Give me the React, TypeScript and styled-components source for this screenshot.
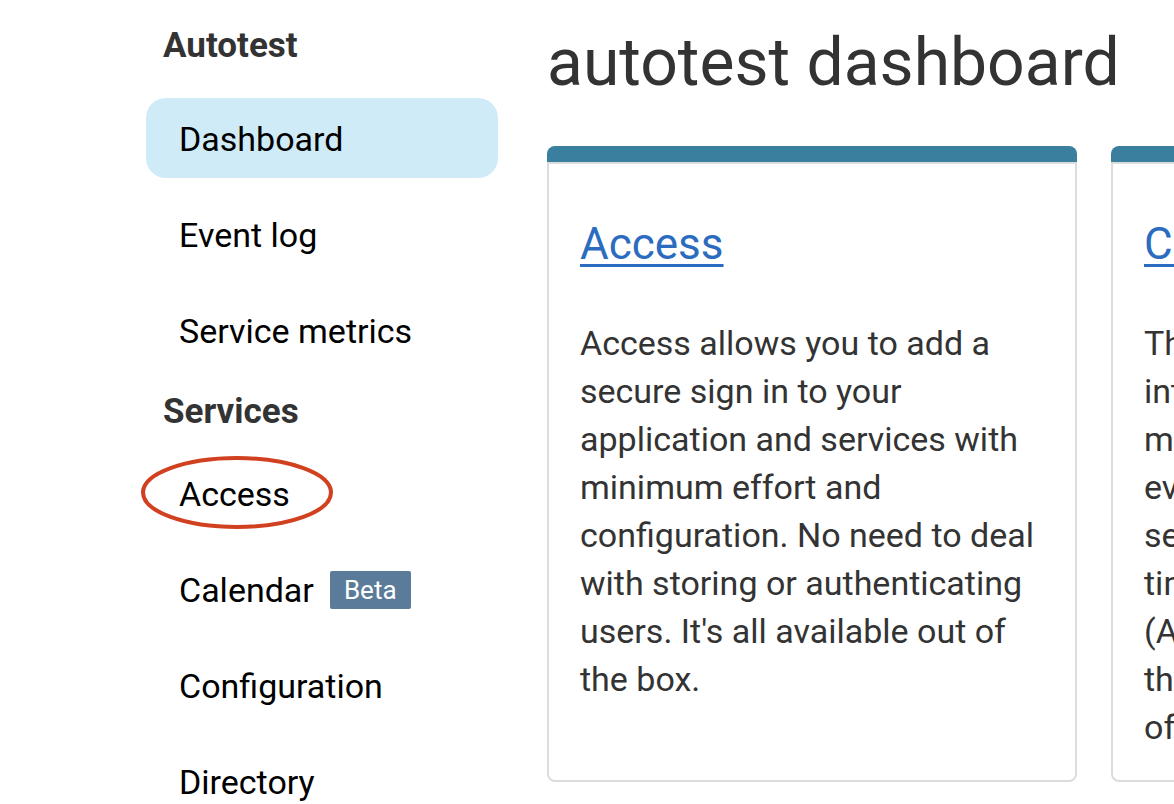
import React from "react";
import styled, { createGlobalStyle } from "styled-components";

const Global = createGlobalStyle`
  html, body { margin: 0; padding: 0; background: #fff; }
  body { font-family: Roboto, "Liberation Sans", sans-serif; overflow: hidden; }
`;

const Page = styled.div`
  display: flex;
  align-items: flex-start;
  gap: 49px;
  padding-left: 146px;
  width: 1800px;
`;

const Sidebar = styled.nav`
  width: 352px;
  flex: none;
  display: flex;
  flex-direction: column;
  padding-top: 25px;
`;

const SectionTitle = styled.h3<{ $mt: number; $mb: number }>`
  margin: ${(p) => p.$mt}px 0 ${(p) => p.$mb}px 17px;
  font-size: 35px;
  line-height: 42px;
  font-weight: 700;
  color: #333;
`;

const NavItem = styled.a<{ $active?: boolean }>`
  position: relative;
  display: flex;
  align-items: center;
  gap: 16px;
  height: 80px;
  margin-bottom: 16px;
  padding-left: 33px;
  padding-top: 2px;
  box-sizing: border-box;
  border-radius: 20px;
  background: ${(p) => (p.$active ? "#cfebf7" : "transparent")};
  color: #000;
  font-size: 34px;
  text-decoration: none;
`;

const Badge = styled.span`
  display: inline-block;
  background: #5b7b9a;
  color: #fff;
  font-size: 26px;
  line-height: 38px;
  padding: 0 14px;
  border-radius: 2px;
`;

const Circle = styled.svg`
  position: absolute;
  left: -6px;
  top: 2px;
  width: 194px;
  height: 75px;
  pointer-events: none;
`;

const Main = styled.main`
  display: flex;
  flex-direction: column;
`;

const Title = styled.h1`
  margin: 22px 0 42px;
  font-size: 66px;
  line-height: 82px;
  font-weight: 400;
  color: #333;
`;

const Cards = styled.div`
  display: grid;
  grid-template-columns: 530px 530px;
  gap: 34px;
`;

const Card = styled.section`
  display: flex;
  flex-direction: column;
`;

const CardBar = styled.div`
  height: 16px;
  background: #3a7f9e;
  border-radius: 8px 8px 0 0;
`;

const CardBody = styled.div`
  flex: 1;
  border: 2px solid #dcdcdc;
  border-radius: 0 0 8px 8px;
  padding: 51px 31px 29px;
`;

const CardTitle = styled.a`
  display: block;
  font-size: 44px;
  line-height: 58px;
  color: #2c6cc0;
  text-decoration: underline;
  text-decoration-thickness: 3px;
  text-underline-offset: 5px;
  margin-bottom: 46px;
`;

const CardText = styled.p`
  margin: 0;
  font-size: 34px;
  line-height: 48px;
  color: #333;
`;

export default function App() {
  return (
    <>
      <Global />
      <Page>
        <Sidebar>
          <SectionTitle $mt={0} $mb={31}>Autotest</SectionTitle>
          <NavItem $active href="#">Dashboard</NavItem>
          <NavItem href="#">Event log</NavItem>
          <NavItem href="#">Service metrics</NavItem>
          <SectionTitle $mt={5} $mb={20}>Services</SectionTitle>
          <NavItem href="#">
            Access
            <Circle viewBox="0 0 194 75">
              <ellipse cx="97" cy="37.5" rx="94" ry="34.5" fill="none" stroke="#d1401f" strokeWidth="4" />
            </Circle>
          </NavItem>
          <NavItem href="#">
            Calendar <Badge>Beta</Badge>
          </NavItem>
          <NavItem href="#">Configuration</NavItem>
          <NavItem href="#">Directory</NavItem>
        </Sidebar>
        <Main>
          <Title>autotest dashboard</Title>
          <Cards>
            <Card>
              <CardBar />
              <CardBody>
                <CardTitle href="#">Access</CardTitle>
                <CardText>
                  Access allows you to add a secure sign in to your application and services with minimum effort and
                  configuration. No need to deal with storing or authenticating users. It's all available out of the
                  box.
                </CardText>
              </CardBody>
            </Card>
            <Card>
              <CardBar />
              <CardBody>
                <CardTitle href="#">Calendar</CardTitle>
                <CardText>
                  The calendar service
                  <br />
                  integrates scheduling,
                  <br />
                  meetings, reminders,
                  <br />
                  events and recurring
                  <br />
                  series for users at any
                  <br />
                  time, in any time zone
                  <br />
                  (API and webhooks),
                  <br />
                  through a simple set
                  <br />
                  of endpoints.
                </CardText>
              </CardBody>
            </Card>
          </Cards>
        </Main>
      </Page>
    </>
  );
}
